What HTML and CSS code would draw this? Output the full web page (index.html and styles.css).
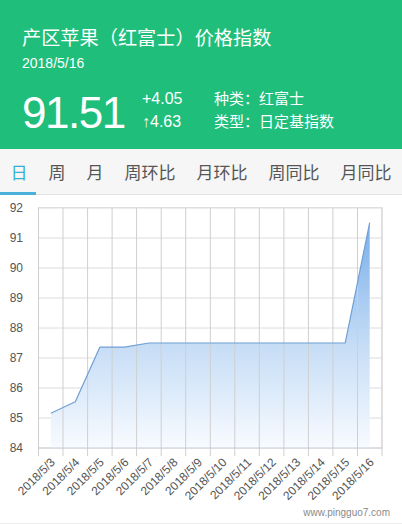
FILE: index.html
```html
<!DOCTYPE html>
<html lang="zh-CN">
<head>
<meta charset="utf-8">
<title>产区苹果（红富士）价格指数</title>
<link rel="stylesheet" href="styles.css">
</head>
<body>
<div class="page">
  <header class="header">
    <h1 class="title">产区苹果（红富士）价格指数</h1>
    <div class="date">2018/5/16</div>
    <div class="stats">
      <div class="big">91.51</div>
      <div class="changes">
        <div class="chg">+4.05</div>
        <div class="chg">↑4.63</div>
      </div>
      <div class="info">
        <div class="info-row">种类：红富士</div>
        <div class="info-row">类型：日定基指数</div>
      </div>
    </div>
  </header>
  <nav class="tabs">
    <div class="tab active">日</div>
    <div class="tab">周</div>
    <div class="tab">月</div>
    <div class="tab wide">周环比</div>
    <div class="tab wide">月环比</div>
    <div class="tab wide">周同比</div>
    <div class="tab wide">月同比</div>
  </nav>
  <div class="chart">
    <svg class="chart-svg" width="402" height="330" viewBox="0 195 402 330" xmlns="http://www.w3.org/2000/svg">
      <defs>
        <linearGradient id="fillg" gradientUnits="userSpaceOnUse" x1="0" y1="222" x2="0" y2="448">
          <stop offset="0" stop-color="#78aee9"/>
          <stop offset="0.55" stop-color="#c6ddf6"/>
          <stop offset="1" stop-color="#f8fbff"/>
        </linearGradient>
      </defs>
      <rect x="38.5" y="207.5" width="343.5" height="240.5" fill="#ffffff" stroke="#e6e0e0" stroke-width="1"/>
      <g stroke="#dcdcdc" stroke-width="1">
        <line x1="38.5" y1="208" x2="382" y2="208"/>
        <line x1="38.5" y1="238" x2="382" y2="238"/>
        <line x1="38.5" y1="268" x2="382" y2="268"/>
        <line x1="38.5" y1="298" x2="382" y2="298"/>
        <line x1="38.5" y1="328" x2="382" y2="328"/>
        <line x1="38.5" y1="358" x2="382" y2="358"/>
        <line x1="38.5" y1="388" x2="382" y2="388"/>
        <line x1="38.5" y1="418" x2="382" y2="418"/>
      </g>
      <polygon fill="url(#fillg)" points="50.8,448 50.8,413.2 75.3,401.8 99.8,347.2 124.4,347.2 148.9,343 173.5,343 198,343 222.5,343 247.1,343 271.6,343 296.1,343 320.7,343 345.2,343 369.7,222.7 369.7,448"/>
      <g stroke="#cfcfcf" stroke-width="1">
        <line x1="38.5" y1="208" x2="38.5" y2="456"/>
        <line x1="63" y1="208" x2="63" y2="456"/>
        <line x1="87.6" y1="208" x2="87.6" y2="456"/>
        <line x1="112.1" y1="208" x2="112.1" y2="456"/>
        <line x1="136.6" y1="208" x2="136.6" y2="456"/>
        <line x1="161.2" y1="208" x2="161.2" y2="456"/>
        <line x1="185.7" y1="208" x2="185.7" y2="456"/>
        <line x1="210.3" y1="208" x2="210.3" y2="456"/>
        <line x1="234.8" y1="208" x2="234.8" y2="456"/>
        <line x1="259.3" y1="208" x2="259.3" y2="456"/>
        <line x1="283.9" y1="208" x2="283.9" y2="456"/>
        <line x1="308.4" y1="208" x2="308.4" y2="456"/>
        <line x1="332.9" y1="208" x2="332.9" y2="456"/>
        <line x1="357.5" y1="208" x2="357.5" y2="456"/>
        <line x1="382" y1="208" x2="382" y2="456"/>
      </g>
      <line x1="38.5" y1="448" x2="382" y2="448" stroke="#c4ccd6" stroke-width="1"/>
      <polyline fill="none" stroke="#6f9fd4" stroke-width="1.2" stroke-linejoin="round" points="50.8,413.2 75.3,401.8 99.8,347.2 124.4,347.2 148.9,343 173.5,343 198,343 222.5,343 247.1,343 271.6,343 296.1,343 320.7,343 345.2,343 369.7,222.7"/>
      <g class="ylab" text-anchor="end">
        <text x="23" y="212">92</text>
        <text x="23" y="242">91</text>
        <text x="23" y="272">90</text>
        <text x="23" y="302">89</text>
        <text x="23" y="332">88</text>
        <text x="23" y="362">87</text>
        <text x="23" y="392">86</text>
        <text x="23" y="422">85</text>
        <text x="23" y="452">84</text>
      </g>
      <g class="xlab" text-anchor="end">
        <text transform="translate(55.8,463) rotate(-45)">2018/5/3</text>
        <text transform="translate(80.3,463) rotate(-45)">2018/5/4</text>
        <text transform="translate(104.8,463) rotate(-45)">2018/5/5</text>
        <text transform="translate(129.4,463) rotate(-45)">2018/5/6</text>
        <text transform="translate(153.9,463) rotate(-45)">2018/5/7</text>
        <text transform="translate(178.5,463) rotate(-45)">2018/5/8</text>
        <text transform="translate(203,463) rotate(-45)">2018/5/9</text>
        <text transform="translate(227.5,463) rotate(-45)">2018/5/10</text>
        <text transform="translate(252.1,463) rotate(-45)">2018/5/11</text>
        <text transform="translate(276.6,463) rotate(-45)">2018/5/12</text>
        <text transform="translate(301.1,463) rotate(-45)">2018/5/13</text>
        <text transform="translate(325.7,463) rotate(-45)">2018/5/14</text>
        <text transform="translate(350.2,463) rotate(-45)">2018/5/15</text>
        <text transform="translate(374.7,463) rotate(-45)">2018/5/16</text>
      </g>
      <text class="mark" x="390" y="516" text-anchor="end">www.pingguo7.com</text>
      <line x1="0" y1="523.5" x2="402" y2="523.5" stroke="#eeeeee" stroke-width="1"/>
    </svg>
  </div>
</div>
</body>
</html>
```

FILE: styles.css
```css
* { box-sizing: border-box; }
html, body { margin: 0; padding: 0; background: #ffffff; }
body {
  font-family: "Liberation Sans", "Noto Sans CJK SC", sans-serif;
  width: 402px;
  height: 525px;
  overflow: hidden;
}
.page { width: 402px; }

.header {
  background: #20be7b;
  color: #ffffff;
  height: 149px;
  padding: 23px 0 0 22px;
}
.title {
  margin: 0;
  font-family: "Noto Sans CJK SC", sans-serif;
  font-weight: 400;
  font-size: 19.2px;
  line-height: 28px;
  height: 28px;
}
.date {
  font-size: 14px;
  line-height: 18px;
  margin-top: 3px;
}
.stats {
  display: flex;
  align-items: flex-start;
  margin-top: 14px;
}
.big {
  font-size: 44px;
  line-height: 44px;
  width: 120px;
  margin-top: 5px;
  letter-spacing: -1.5px;
}
.changes {
  width: 72px;
  font-size: 16px;
  padding-top: 1px;
}
.chg { line-height: 23px; }
.info {
  font-family: "Noto Sans CJK SC", sans-serif;
  font-size: 15px;
}
.info-row { line-height: 23px; }

.tabs {
  display: flex;
  height: 46px;
  background: #f6f6f6;
  border-bottom: 1px solid #e2e2e2;
}
.tab {
  position: relative;
  width: 38px;
  padding-left: 10.5px;
  font-family: "Noto Sans CJK SC", sans-serif;
  font-size: 17px;
  line-height: 45px;
  color: #555555;
}
.tab.wide { width: 72px; }
.tab.active { color: #35b0d2; }
.tab.active::after {
  content: "";
  position: absolute;
  left: 0;
  bottom: -1px;
  width: 36px;
  height: 3px;
  background: #4ab2d8;
}

.chart { height: 330px; }
.chart-svg { display: block; }
.ylab text {
  font-family: "Liberation Sans", sans-serif;
  font-size: 12px;
  fill: #555555;
}
.xlab text {
  font-family: "Liberation Sans", sans-serif;
  font-size: 12px;
  fill: #555555;
}
.mark {
  font-family: "Liberation Sans", sans-serif;
  font-size: 10px;
  fill: #8a8a8a;
}
```
